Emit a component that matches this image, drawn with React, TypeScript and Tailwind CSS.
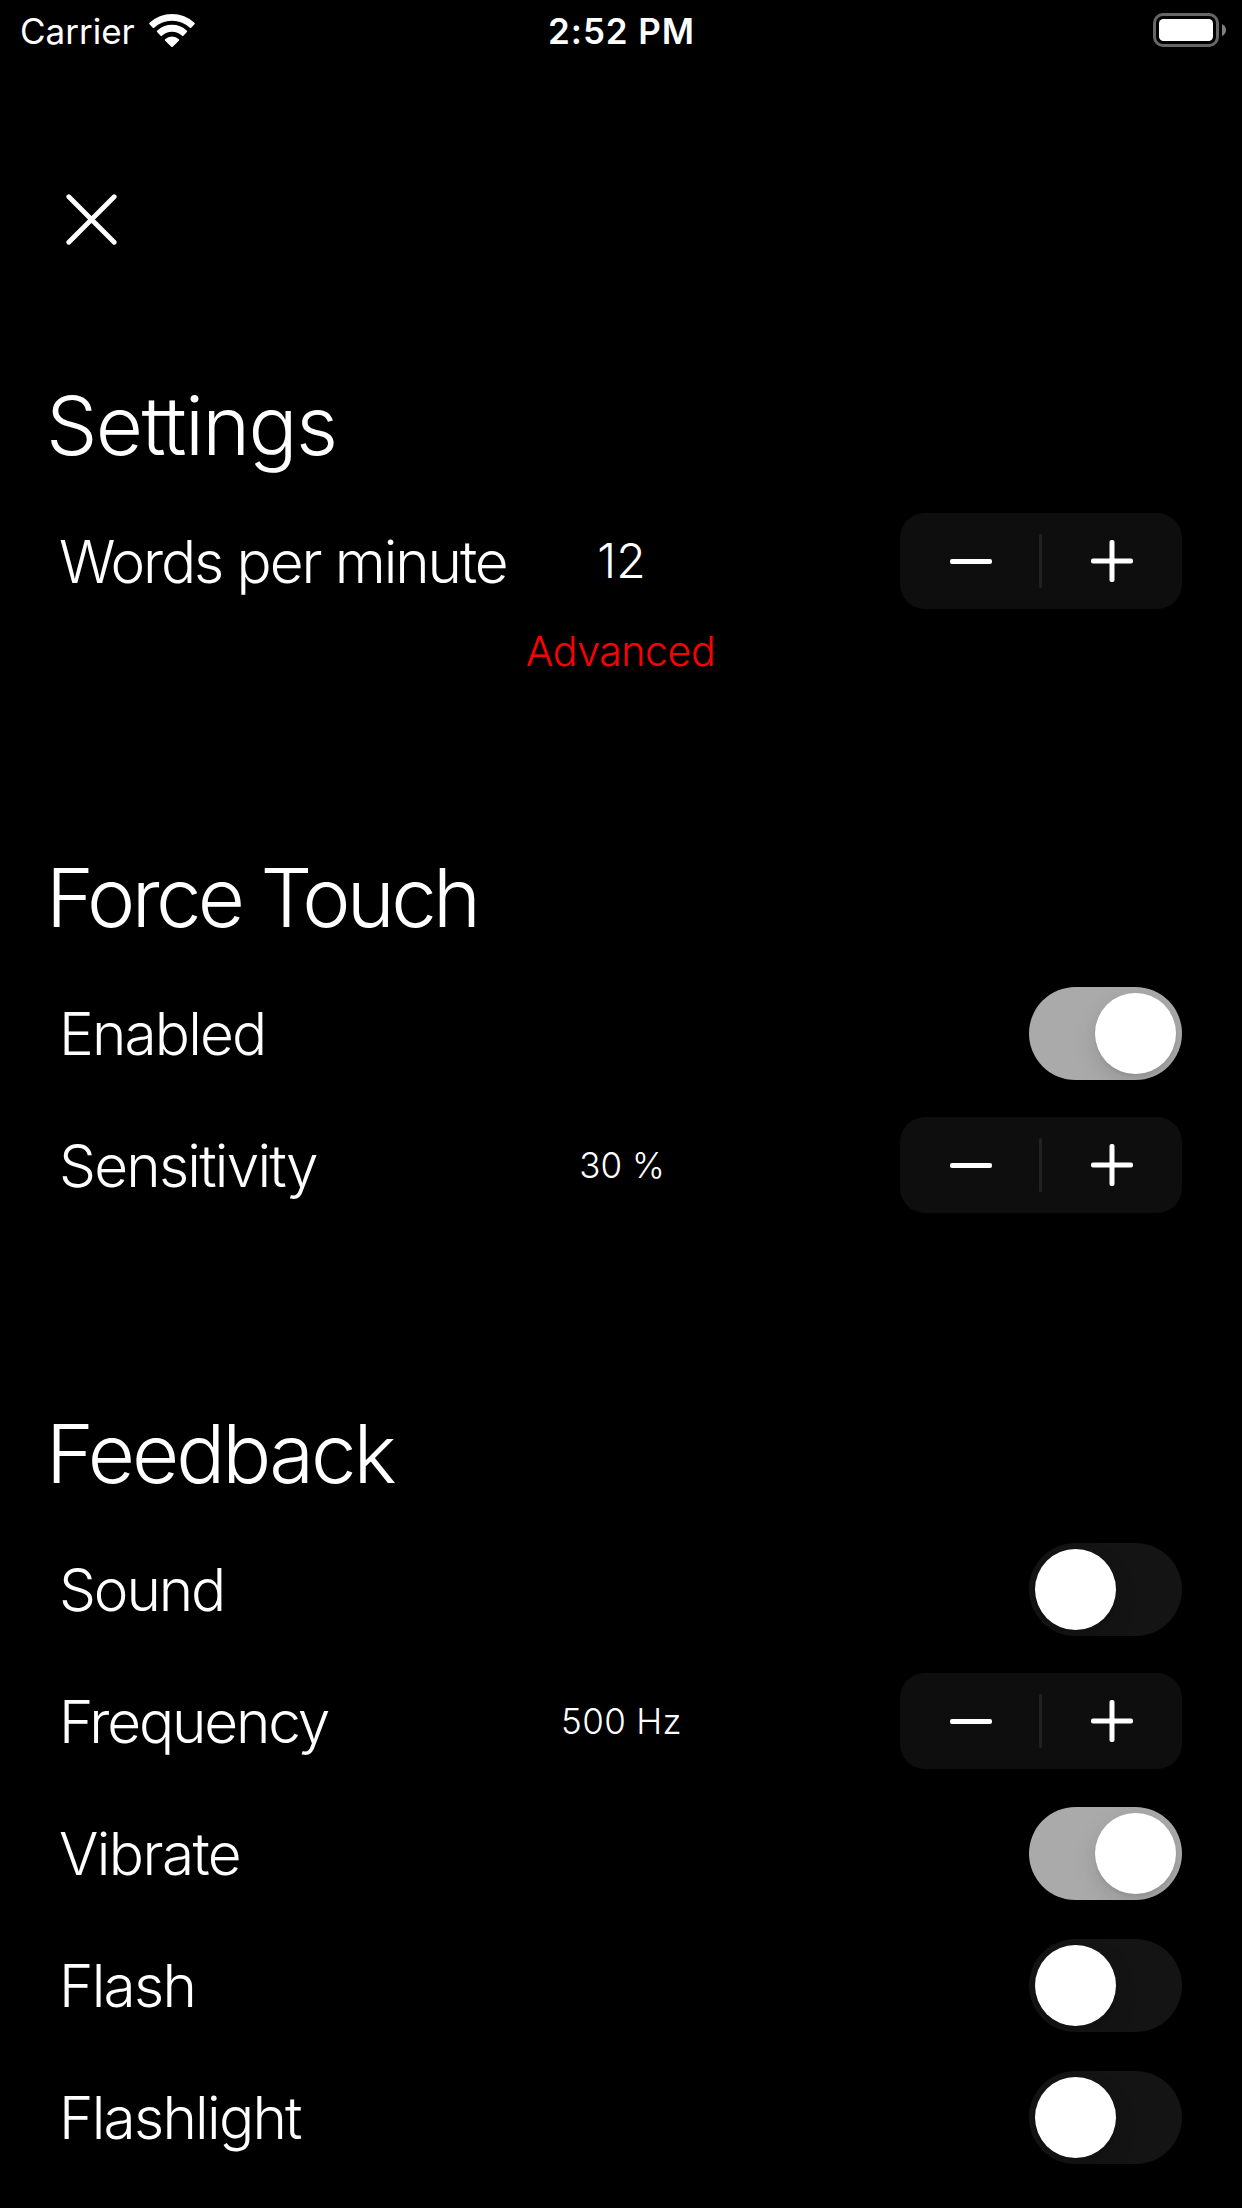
import { useState } from "react";

function WifiIcon() {
  return (
    <svg viewBox="0 0 48 36" className="h-9 w-12" fill="white" stroke="white" strokeWidth="2" strokeLinejoin="round">
      <path d="M2.2 10.5A32 32 0 0 1 45.8 10.5L42.45 14A27 27 0 0 0 5.55 14Z" />
      <path d="M9.8 18.4A21 21 0 0 1 38.2 18.4L34.7 22A15.7 15.7 0 0 0 13.3 22Z" />
      <path d="M17.8 27A9 9 0 0 1 30.2 27L24 33Z" />
    </svg>
  );
}

function BatteryIcon() {
  return (
    <svg viewBox="0 0 74 36" className="h-9 w-[74px]">
      <rect x="1.5" y="2.5" width="63" height="31" rx="8.5" fill="none" stroke="#666666" strokeWidth="3" />
      <rect x="6" y="7" width="54" height="22" rx="4.5" fill="white" />
      <path d="M69 12Q73 14 73 18T69 24Z" fill="#7f7f7f" />
    </svg>
  );
}

function StatusBar() {
  return (
    <header className="grid h-[62px] grid-cols-[1fr_160px_1fr] items-center pr-[15px] pl-[20px]">
      <div className="flex items-center gap-[13px]">
        <span className="text-[35px] leading-9">Carrier</span>
        <span className="-mt-px">
          <WifiIcon />
        </span>
      </div>
      <span className="-ml-[4px] text-center text-[35px] leading-9 font-semibold whitespace-nowrap tracking-[0.9px]">2:52 PM</span>
      <span className="-mt-[2px] justify-self-end">
        <BatteryIcon />
      </span>
    </header>
  );
}

function Stepper({ onStep }: { onStep: (delta: number) => void }) {
  return (
    <div className="grid h-24 w-[282px] grid-cols-[139px_3px_140px] items-center justify-self-end rounded-[25px] bg-[#0e0e0e]">
      <button aria-label="Decrease" onClick={() => onStep(-1)} className="flex h-full items-center pl-[50px]">
        <svg viewBox="0 0 42 42" className="size-[42px]">
          <rect x="0" y="19" width="42" height="5" rx="2" fill="white" />
        </svg>
      </button>
      <div className="h-[54px] w-[3px] rounded-full bg-[#222222]" />
      <button aria-label="Increase" onClick={() => onStep(1)} className="flex h-full items-center pl-[49px]">
        <svg viewBox="0 0 42 42" className="size-[42px]" fill="white">
          <rect x="0" y="18.5" width="42" height="5" rx="2" />
          <rect x="18.5" y="0" width="5" height="42" rx="2" />
        </svg>
      </button>
    </div>
  );
}

function Toggle({ initial }: { initial: boolean }) {
  const [on, setOn] = useState(initial);
  return (
    <button
      role="switch"
      aria-checked={on}
      onClick={() => setOn(!on)}
      className={`mt-px flex h-[93px] w-[153px] items-center overflow-hidden rounded-full p-[6px] justify-self-end ${
        on ? "justify-end bg-[#aaaaaa]" : "justify-start bg-[#141414]"
      }`}
    >
      <span className="size-[81px] rounded-full bg-white shadow-[0_9px_24px_rgba(0,0,0,0.12),0_3px_3px_rgba(0,0,0,0.05)]" />
    </button>
  );
}

function Heading({ text, tracking }: { text: string; tracking: string }) {
  return <h2 className={`h-[139px] pl-[46px] text-[81.5px] leading-[139px] font-light ${tracking}`}>{text}</h2>;
}

type RowProps = {
  label: string;
  tracking: string;
  children: React.ReactNode;
};

function Row({ label, tracking, children }: RowProps) {
  return (
    <div className="grid h-[132px] grid-cols-[469px_187px_1fr] items-center pr-[60px] pl-[59px]">
      <span className={`text-[58.5px] leading-[59px] font-light whitespace-nowrap ${tracking}`}>{label}</span>
      {children}
    </div>
  );
}

function ToggleRow({ label, tracking, initial }: { label: string; tracking: string; initial: boolean }) {
  return (
    <Row label={label} tracking={tracking}>
      <span />
      <Toggle initial={initial} />
    </Row>
  );
}

type StepperRowProps = {
  label: string;
  tracking: string;
  initial: number;
  step: number;
  unit: string;
  valueClass: string;
};

function StepperRow({ label, tracking, initial, step, unit, valueClass }: StepperRowProps) {
  const [value, setValue] = useState(initial);
  return (
    <Row label={label} tracking={tracking}>
      <span className={`text-center font-light whitespace-nowrap ${valueClass}`}>
        {value}
        {unit}
      </span>
      <Stepper onStep={(delta) => setValue(value + delta * step)} />
    </Row>
  );
}

export default function App() {
  return (
    <main className="flex h-[2208px] w-[1242px] flex-col overflow-hidden bg-black font-['Inter','Liberation_Sans',sans-serif] text-white">
      <StatusBar />

      <div className="h-[294px] pt-[132px] pl-[66px]">
        <button aria-label="Close" className="block">
          <svg viewBox="0 0 51 51" className="size-[51px]" stroke="white" strokeWidth="4.8" strokeLinecap="round">
            <path d="M2.8 2.8L48.2 48.2M48.2 2.8L2.8 48.2" />
          </svg>
        </button>
      </div>

      <section className="h-[472px]">
        <Heading text="Settings" tracking="tracking-[-1.65px]" />
        <StepperRow
          label="Words per minute"
          tracking="tracking-[-2.1px]"
          initial={12}
          step={1}
          unit=""
          valueClass="text-[48px] leading-[48px]"
        />
        <button className="mx-auto block h-12 pr-px text-[41px] leading-[48px] font-light tracking-[-0.4px] text-[#ff0000]">
          Advanced
        </button>
      </section>

      <section className="h-[556px]">
        <Heading text="Force Touch" tracking="tracking-[-3.7px]" />
        <ToggleRow label="Enabled" tracking="tracking-[-1.85px]" initial={true} />
        <StepperRow
          label="Sensitivity"
          tracking="tracking-[-1.8px]"
          initial={30}
          step={5}
          unit=" %"
          valueClass="pl-px text-[35px] leading-9"
        />
      </section>

      <section>
        <Heading text="Feedback" tracking="tracking-[-3px]" />
        <ToggleRow label="Sound" tracking="tracking-[-2.1px]" initial={false} />
        <StepperRow
          label="Frequency"
          tracking="tracking-[-2.15px]"
          initial={500}
          step={50}
          unit=" Hz"
          valueClass="text-[35px] leading-9 tracking-[0.35px]"
        />
        <ToggleRow label="Vibrate" tracking="tracking-[-1.6px]" initial={true} />
        <ToggleRow label="Flash" tracking="tracking-[-1.75px]" initial={false} />
        <ToggleRow label="Flashlight" tracking="tracking-[-1.75px]" initial={false} />
      </section>
    </main>
  );
}
